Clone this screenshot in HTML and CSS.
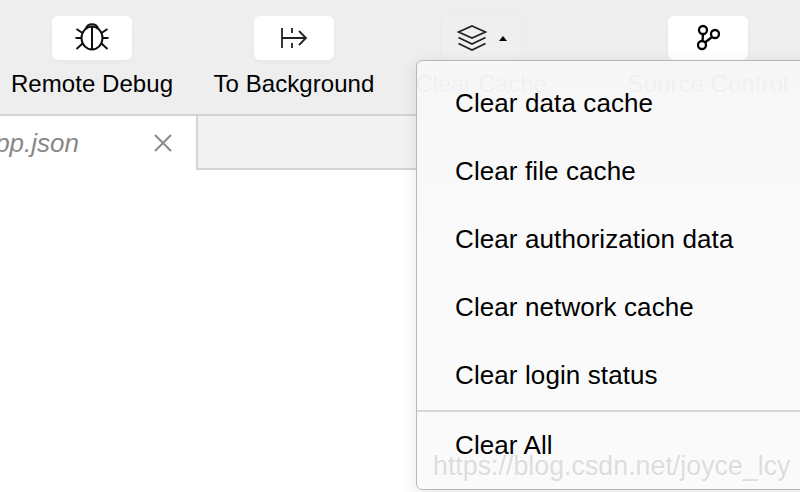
FILE: index.html
```html
<!DOCTYPE html>
<html lang="en">
<head>
    <meta charset="UTF-8">
    <meta name="viewport" content="width=device-width, initial-scale=1.0">
    <title>Clear Cache</title>
    <link rel="stylesheet" href="styles.css">
</head>
<body>
    <div class="toolbar">
        <div class="tool">
            <div class="tool-btn">
                <svg class="icon" width="36" height="36" viewBox="0 0 36 36">
                    <ellipse cx="18" cy="18" rx="10.5" ry="11.5"/>
                    <path d="M18 7V29.500M12 9C12.500 2.500 23.500 2.500 24 9M8.500 13L2.500 9M8 18H1.500M8.500 23.500L2.500 29M27.500 13L33.500 9M28 18H34.500M27.500 23.500L33.500 29"/>
                </svg>
            </div>
            <span class="tool-label">Remote Debug</span>
        </div>
        <div class="tool">
            <div class="tool-btn">
                <svg class="icon icon-thin" width="28" height="24" viewBox="0 0 28 24">
                    <path d="M2 2V22M2 12H25M12 2V7M12 17V22M19 5L26 12L19 19"/>
                </svg>
            </div>
            <span class="tool-label">To Background</span>
        </div>
        <div class="tool tool-narrow">
            <div class="tool-btn tool-btn-open">
                <svg class="icon icon-thin" width="30" height="26" viewBox="0 0 30 26">
                    <path d="M15 1L28.500 7L15 13L1.500 7ZM1.500 12.500L15 19L28.500 12.500M1.500 18.500L15 25L28.500 18.500"/>
                </svg>
                <span class="caret"></span>
            </div>
            <span class="tool-label">Clear Cache</span>
        </div>
        <div class="tool tool-far">
            <div class="tool-btn">
                <svg class="icon icon-bold" width="26" height="28" viewBox="0 0 26 28">
                    <circle cx="8" cy="6" r="4"/>
                    <circle cx="7" cy="21" r="4"/>
                    <circle cx="20" cy="10" r="4"/>
                    <path d="M8 10L7.500 17M17 13L10 18.500"/>
                </svg>
            </div>
            <span class="tool-label">Source Control</span>
        </div>
    </div>

    <div class="tabs">
        <div class="tab">
            <span class="tab-name">app.json</span>
            <svg class="tab-close" width="20" height="20" viewBox="0 0 20 20">
                <path d="M2 2L18 18M18 2L2 18"/>
            </svg>
        </div>
    </div>

    <div class="menu">
        <div class="menu-item">Clear data cache</div>
        <div class="menu-item">Clear file cache</div>
        <div class="menu-item">Clear authorization data</div>
        <div class="menu-item">Clear network cache</div>
        <div class="menu-item">Clear login status</div>
        <div class="menu-item menu-item-all">Clear All</div>
    </div>

    <div class="watermark">https://blog.csdn.net/joyce_lcy</div>
</body>
</html>
```

FILE: styles.css
```css
body {
    font-family: "Liberation Sans", Arial, sans-serif;
    margin: 0;
    padding: 0;
    background-color: #ffffff;
    color: #000000;
    height: 492px;
    overflow: hidden;
    position: relative;
}

.toolbar {
    display: flex;
    gap: 40px;
    height: 98px;
    padding: 16px 0 0 11px;
    background-color: #eeeeee;
    border-bottom: 2px solid #d4d4d4;
    white-space: nowrap;
}

.tool {
    display: flex;
    flex-direction: column;
    align-items: center;
    gap: 10px;
    width: 162px;
}

.tool-narrow {
    width: 132px;
}

.tool-narrow .tool-label {
    letter-spacing: -0.2px;
}

.tool-far {
    margin-left: 40px;
}

.tool-btn {
    display: flex;
    align-items: center;
    justify-content: center;
    gap: 12px;
    box-sizing: border-box;
    width: 80px;
    height: 44px;
    background-color: #ffffff;
    border-radius: 6px;
    box-shadow: 0 2px 4px rgba(0, 0, 0, 0.03);
}

.tool-btn-open {
    padding-left: 2px;
    background-color: #efefef;
    box-shadow: 0 0 3px rgba(0, 0, 0, 0.04);
}

.tool-label {
    font-size: 24px;
    line-height: 28px;
    letter-spacing: 0.06px;
}

.icon {
    fill: none;
    stroke: #111111;
    stroke-width: 2;
}

.icon-thin {
    stroke: #222222;
    stroke-width: 1.8;
}

.icon-bold {
    stroke: #000000;
    stroke-width: 2.3;
}

.caret {
    width: 0;
    height: 0;
    border-left: 4px solid transparent;
    border-right: 4px solid transparent;
    border-bottom: 5px solid #000000;
}

.tabs {
    display: flex;
    height: 52px;
    background-color: #f2f2f2;
    border-bottom: 2px solid #d4d4d4;
}

.tab {
    display: flex;
    align-items: center;
    justify-content: flex-end;
    gap: 74px;
    box-sizing: border-box;
    width: 198px;
    height: 54px;
    padding-right: 23px;
    background-color: #ffffff;
    border-right: 2px solid #d4d4d4;
    overflow: hidden;
}

.tab-name {
    font-size: 26px;
    font-style: italic;
    color: #888888;
}

.tab-close {
    flex: none;
    fill: none;
    stroke: #8a8a8a;
    stroke-width: 2;
}

/* dropdown runs off the right side of the window */
.menu {
    position: absolute;
    left: 416px;
    top: 60px;
    width: 420px;
    padding: 9px 0;
    background: linear-gradient(rgba(247, 247, 247, 0.97), rgba(250, 250, 250, 0.97) 50%);
    border: 1px solid #b8b8b8;
    border-radius: 6px;
    box-shadow: 0 4px 16px rgba(0, 0, 0, 0.1);
}

.menu-item {
    height: 68px;
    line-height: 66px;
    padding-left: 38px;
    font-size: 26px;
    letter-spacing: 0.1px;
}

.menu-item-all {
    border-top: 2px solid #d6d6d6;
}

.watermark {
    position: absolute;
    left: 433px;
    top: 446px;
    font-size: 26.8px;
    line-height: 40px;
    white-space: nowrap;
    color: rgba(190, 190, 190, 0.5);
    text-shadow: 1px 1px 1px rgba(255, 255, 255, 0.6);
}
```
